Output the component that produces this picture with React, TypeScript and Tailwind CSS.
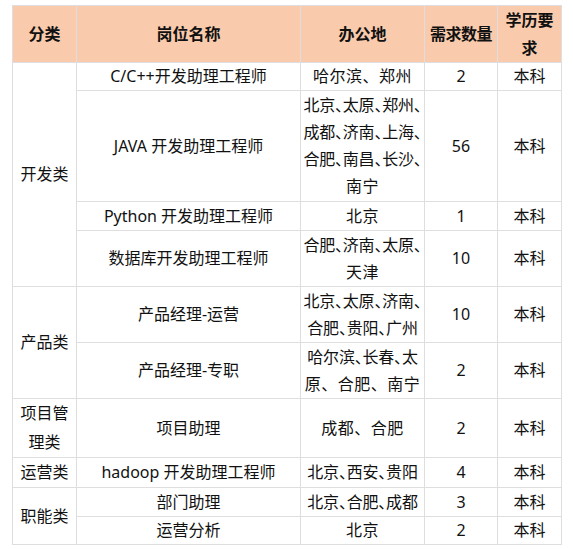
type Row = {
  cat?: { lines: string[]; span: number };
  title: string;
  cities: string[];
  count: string;
  edu: string;
  h: string;
};

const rows: Row[] = [
  { cat: { lines: ['开发类'], span: 4 }, title: 'C/C++开发助理工程师', cities: ['哈尔滨、郑州'], count: '2', edu: '本科', h: 'h-[28px]' },
  { title: 'JAVA 开发助理工程师', cities: ['北京、太原、郑州、', '成都、济南、上海、', '合肥、南昌、长沙、', '南宁'], count: '56', edu: '本科', h: 'h-[111px]' },
  { title: 'Python 开发助理工程师', cities: ['北京'], count: '1', edu: '本科', h: 'h-[29px]' },
  { title: '数据库开发助理工程师', cities: ['合肥、济南、太原、', '天津'], count: '10', edu: '本科', h: 'h-[56px]' },
  { cat: { lines: ['产品类'], span: 2 }, title: '产品经理-运营', cities: ['北京、太原、济南、', '合肥、贵阳、广州'], count: '10', edu: '本科', h: 'h-[56px]' },
  { title: '产品经理-专职', cities: ['哈尔滨、长春、太', '原、合肥、南宁'], count: '2', edu: '本科', h: 'h-[56px]' },
  { cat: { lines: ['项目管', '理类'], span: 1 }, title: '项目助理', cities: ['成都、合肥'], count: '2', edu: '本科', h: 'h-[56px]' },
  { cat: { lines: ['运营类'], span: 1 }, title: 'hadoop 开发助理工程师', cities: ['北京、西安、贵阳'], count: '4', edu: '本科', h: 'h-[29px]' },
  { cat: { lines: ['职能类'], span: 2 }, title: '部门助理', cities: ['北京、合肥、成都'], count: '3', edu: '本科', h: 'h-[29px]' },
  { title: '运营分析', cities: ['北京'], count: '2', edu: '本科', h: 'h-[28px]' },
];

const cell = 'border border-[#e0dde0] p-0 text-center align-middle';

export default function App() {
  return (
    <div className="min-h-screen bg-white pl-[12px] pt-[5px] font-['Noto_Sans','Noto_Sans_CJK_SC',sans-serif] text-[16px] leading-[27px] text-[#111]">
      <table className="w-[550px] table-fixed border-collapse">
        <colgroup>
          <col className="w-[64px]" />
          <col className="w-[224px]" />
          <col className="w-[124px]" />
          <col className="w-[73px]" />
          <col className="w-[64px]" />
        </colgroup>
        <thead>
          <tr className="bg-[#f9cbac] font-bold">
            <th className={`${cell} h-[56px]`}>分类</th>
            <th className={cell}>岗位名称</th>
            <th className={cell}>办公地</th>
            <th className={`${cell} whitespace-nowrap tracking-[-0.5px]`}>需求数量</th>
            <th className={`${cell} leading-[28px]`}>
              学历要
              <br />求
            </th>
          </tr>
        </thead>
        <tbody>
          {rows.map((r, i) => (
            <tr key={i}>
              {r.cat && (
                <td rowSpan={r.cat.span} className={`${cell} leading-[29px]`}>
                  {r.cat.lines.map((l) => (
                    <div key={l}>{l}</div>
                  ))}
                </td>
              )}
              <td className={`${cell} ${r.h} whitespace-nowrap`}>{r.title}</td>
              <td className={`${cell} whitespace-nowrap`}>
                {r.cities.map((c) => (
                  <div key={c} className={c.length > 7 ? '[font-feature-settings:"halt"] tracking-[-0.2px]' : 'tracking-[0.5px]'}>
                    {c}
                  </div>
                ))}
              </td>
              <td className={cell}>{r.count}</td>
              <td className={cell}>{r.edu}</td>
            </tr>
          ))}
        </tbody>
      </table>
    </div>
  );
}
